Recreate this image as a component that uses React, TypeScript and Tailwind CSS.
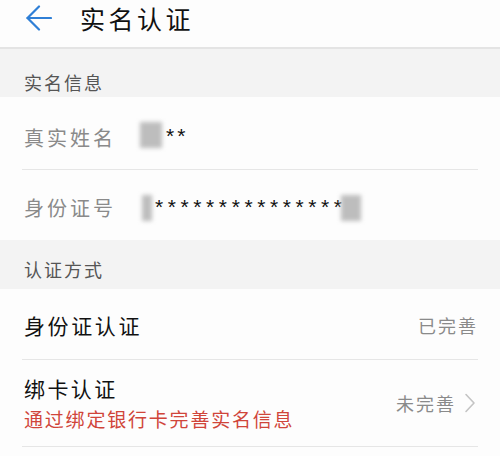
import React from "react";

const cjk = { fontFamily: '"Noto Sans CJK SC", "Noto Sans", sans-serif' };

function Blur({ w, h, className = "" }: { w: string; h: string; className?: string }) {
  return <span className={`inline-block ${w} ${h} bg-[#bdbdbd] blur-[2px] ${className}`} />;
}

export default function App() {
  return (
    <div className="w-[500px] h-[456px] overflow-hidden bg-[#fdfdfd]" style={cjk}>
      {/* Header */}
      <div className="h-[47px] flex items-center bg-[#fdfdfd]">
        <svg className="ml-[26px] mt-[-12px]" width="26" height="26" viewBox="0 0 26 26" fill="none">
          <path d="M1.5 13 H25" stroke="#2f7fd6" strokeWidth="2.2" strokeLinecap="round" />
          <path d="M13 1.5 L1.5 13 L13 24.5" stroke="#2f7fd6" strokeWidth="2.2" strokeLinecap="round" strokeLinejoin="round" />
        </svg>
        <div className="ml-[28px] mt-[-12px] text-[25px] leading-[30px] tracking-[3.5px] text-[#111]">实名认证</div>
      </div>
      <div className="h-[2px] bg-[#e4e4e4]" />

      {/* Section 1 */}
      <div className="h-[48px] bg-[#f3f3f3] pl-[24px] pt-[20px]">
        <div className="text-[18px] leading-[26px] tracking-[2px] text-[#555]">实名信息</div>
      </div>
      <div className="h-[72px] flex items-center pl-[24px] pt-[10px]">
        <div className="text-[20px] leading-[26px] tracking-[3px] text-[#8a8a8a] w-[116px]">真实姓名</div>
        <div className="flex items-center">
          <Blur w="w-[22px]" h="h-[26px]" className="mt-[-6px]" />
          <span className="ml-[4px] text-[21px] tracking-[3px] text-[#111] mt-[-4px]" style={{ fontFamily: '"Liberation Sans", sans-serif' }}>**</span>
        </div>
      </div>
      <div className="mx-[22px] h-px bg-[#e6e6e6]" />
      <div className="h-[70px] flex items-center pl-[24px] pt-[6px]">
        <div className="text-[20px] leading-[26px] tracking-[3px] text-[#8a8a8a] w-[118px]">身份证号</div>
        <div className="flex items-center">
          <Blur w="w-[10px]" h="h-[26px]" />
          <span className="ml-[3px] text-[21px] tracking-[4.6px] text-[#111] mt-[-2px]" style={{ fontFamily: '"Liberation Sans", sans-serif' }}>***************</span>
          <Blur w="w-[20px]" h="h-[26px]" className="ml-[-6px]" />
        </div>
      </div>

      {/* Section 2 */}
      <div className="h-[49px] bg-[#f3f3f3] pl-[24px] pt-[16px]">
        <div className="text-[18px] leading-[26px] tracking-[2px] text-[#555]">认证方式</div>
      </div>
      <div className="h-[70px] flex items-center justify-between pl-[24px] pr-[22px] pt-[2px]">
        <div className="text-[21px] leading-[28px] tracking-[2.6px] text-[#111]">身份证认证</div>
        <div className="text-[18px] leading-[24px] tracking-[2px] text-[#8a8a8a]">已完善</div>
      </div>
      <div className="mx-[22px] h-px bg-[#e6e6e6]" />
      <div className="h-[86px] flex items-center justify-between pl-[24px] pr-[24px]">
        <div className="flex flex-col">
          <div className="text-[21px] leading-[30px] tracking-[2.4px] text-[#111]">绑卡认证</div>
          <div className="text-[19px] leading-[30px] tracking-[1.8px] text-[#d0453a] mt-[1px]">通过绑定银行卡完善实名信息</div>
        </div>
        <div className="flex items-center">
          <div className="text-[18px] leading-[24px] tracking-[2px] text-[#8a8a8a]">未完善</div>
          <svg className="ml-[8px]" width="12" height="20" viewBox="0 0 12 20" fill="none">
            <path d="M2 1.5 L10 10 L2 18.5" stroke="#c4c4c4" strokeWidth="1.6" strokeLinecap="round" strokeLinejoin="round" />
          </svg>
        </div>
      </div>
      <div className="mx-[22px] h-px bg-[#e6e6e6]" />
    </div>
  );
}
